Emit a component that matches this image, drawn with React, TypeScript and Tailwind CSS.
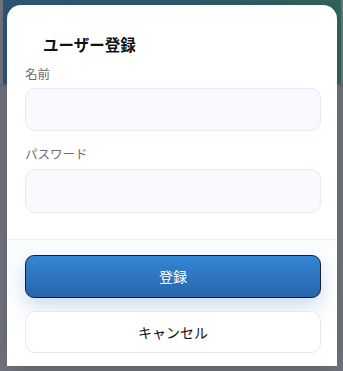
import React from "react";

export default function App() {
  const font = { fontFamily: '"Noto Sans CJK JP", "Noto Sans", sans-serif' };
  return (
    <div
      className="relative w-[343px] h-[371px] overflow-hidden bg-[#6f727c]"
      style={font}
    >
      {/* backdrop page header */}
      <div className="absolute left-[3px] right-[2px] top-0 h-[86px] bg-gradient-to-r from-[#2c5676] via-[#2d5a6c] to-[#2f6459]" />
      <div className="absolute left-0 right-0 top-[84px] h-[4px] bg-gradient-to-b from-[#5f6874] to-[#6f727c]" />

      <div className="relative pl-[7px] pr-[6px] pt-[5px]">
        <div className="flex h-[361px] flex-col rounded-[14px] bg-white shadow-[0_4px_16px_rgba(0,0,0,0.15)]">
          <div className="pl-[36px] pt-[27px]">
            <h2 className="text-[15.5px] font-bold leading-[24px] text-[#111]">
              ユーザー登録
            </h2>
          </div>
          <div className="flex flex-col pl-[18px] pr-[16px] pt-[9px]">
            <label className="text-[12.5px] leading-[18px] text-[#6b6b6b]">名前</label>
            <div className="mt-[5px] h-[43px] rounded-[10px] border border-[#e4ebf5] bg-[#f8fafd]" />
            <label className="mt-[14px] text-[12.5px] leading-[18px] text-[#6b6b6b]">パスワード</label>
            <div className="mt-[6px] h-[44px] rounded-[10px] border border-[#e4ebf5] bg-[#f8fafd]" />
          </div>
          <div className="mt-[26px] h-px bg-[#eef1f6]" />
          <div className="flex flex-1 flex-col gap-[13px] bg-gradient-to-b from-[#fbfcfe] to-white pl-[18px] pr-[16px] pt-[15px]">
            <button className="h-[43px] rounded-[9px] border-[1.5px] border-[#1d1f24] bg-gradient-to-b from-[#3386d5] to-[#2865ac] text-[14px] text-white shadow-[0_8px_18px_rgba(40,100,180,0.22)]">
              登録
            </button>
            <button className="h-[42px] rounded-[10px] border border-[#e4e8ef] bg-white text-[14px] text-[#111]">
              キャンセル
            </button>
          </div>
        </div>
      </div>
    </div>
  );
}
